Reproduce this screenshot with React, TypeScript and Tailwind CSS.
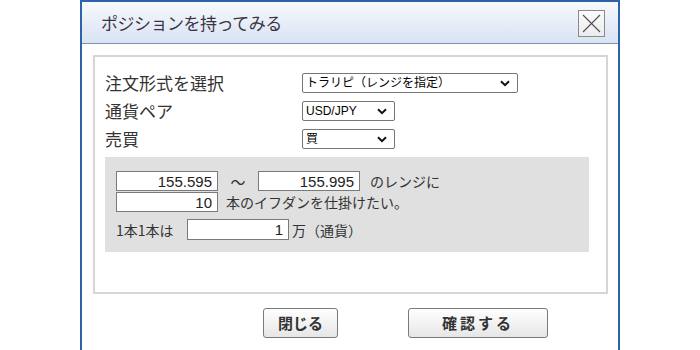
import React from "react";

const jp = { fontFamily: '"Noto Sans CJK JP", "Noto Sans", sans-serif' };
const ui = { fontFamily: '"Liberation Sans", "Noto Sans CJK JP", sans-serif' };

const Chevron = () => (
  <svg width="10" height="7" viewBox="0 0 10 7" className="shrink-0">
    <path d="M1 1.2 L5 5.2 L9 1.2" fill="none" stroke="#111" strokeWidth="2" />
  </svg>
);

const FakeSelect = ({ value, width }: { value: string; width: string }) => (
  <div
    className={`${width} h-[20px] flex items-center justify-between border border-[#767676] rounded-[2px] bg-white pl-[3px] pr-[7px] text-[12px] text-black leading-none`}
    style={ui}
  >
    <span>{value}</span>
    <Chevron />
  </div>
);

const NumBox = ({ value, h }: { value: string; h: string }) => (
  <div
    className={`w-[102px] ${h} flex items-center justify-end border border-[#7a7a7a] bg-white pr-[5px] text-[15px] text-[#222] leading-none`}
    style={ui}
  >
    {value}
  </div>
);

export default function App() {
  return (
    <div className="w-[700px] h-[350px] bg-white overflow-hidden" style={jp}>
      <div className="ml-[80px] w-[540px] h-[350px] border-x-2 border-t-2 border-[#2d63a8] flex flex-col">
        {/* header */}
        <div className="h-[42px] shrink-0 flex items-center justify-between border-b border-[#7f93b0] bg-gradient-to-b from-[#f7f9fd] to-[#d9e3f3] pl-[19px] pr-[13px]">
          <span className="text-[17px] text-[#3a3342] tracking-[-0.5px]">ポジションを持ってみる</span>
          <div className="w-[27px] h-[27px] mt-[2px] border border-[#8a8a8a] bg-gradient-to-b from-[#fbfbfb] to-[#ececec] flex items-center justify-center">
            <svg width="21" height="21" viewBox="0 0 21 21">
              <path d="M2 2 L19 19 M19 2 L2 19" stroke="#555" strokeWidth="1.2" />
            </svg>
          </div>
        </div>

        {/* body */}
        <div className="flex-1 bg-white pt-[11px] pl-[11px] pr-[10px]">
          <div className="h-[239px] border-2 border-[#d6d6d6] pt-[12px] pl-[10px] pr-[17px]">
            <div className="flex items-center h-[28px]">
              <span className="w-[197px] text-[17px] text-[#333]">注文形式を選択</span>
              <FakeSelect value="トラリピ（レンジを指定）" width="w-[216px]" />
            </div>
            <div className="flex items-center h-[28px]">
              <span className="w-[197px] text-[17px] text-[#333]">通貨ペア</span>
              <FakeSelect value="USD/JPY" width="w-[93px]" />
            </div>
            <div className="flex items-center h-[28px]">
              <span className="w-[197px] text-[17px] text-[#333]">売買</span>
              <FakeSelect value="買" width="w-[93px]" />
            </div>

            <div className="mt-[4px] h-[95px] bg-[#e0e0e0] pl-[11px] pt-[14px] text-[14px] text-[#333]">
              <div className="flex items-center">
                <NumBox value="155.595" h="h-[20px]" />
                <span className="w-[40px] text-center text-[15px] leading-none">～</span>
                <NumBox value="155.995" h="h-[20px]" />
                <span className="ml-[10px] leading-none">のレンジに</span>
              </div>
              <div className="flex items-center mt-[1px]">
                <NumBox value="10" h="h-[20px]" />
                <span className="ml-[8px] leading-none">本のイフダンを仕掛けたい。</span>
              </div>
              <div className="flex items-center mt-[7px]">
                <span className="w-[71px] leading-none">1本1本は</span>
                <NumBox value="1" h="h-[21px]" />
                <span className="ml-[3px] leading-none">万（通貨）</span>
              </div>
            </div>
          </div>

          <div className="flex mt-[14px]">
            <button className="ml-[170px] w-[75px] h-[30px] border border-[#7a7a7a] rounded-[3px] bg-gradient-to-b from-white to-[#e6e6e6] text-[15px] font-bold text-[#333]">
              閉じる
            </button>
            <button className="ml-[70px] w-[140px] h-[30px] border border-[#7a7a7a] rounded-[3px] bg-gradient-to-b from-white to-[#e6e6e6] text-[15px] font-bold text-[#333] tracking-[3px]">
              確認する
            </button>
          </div>
        </div>
      </div>
    </div>
  );
}
